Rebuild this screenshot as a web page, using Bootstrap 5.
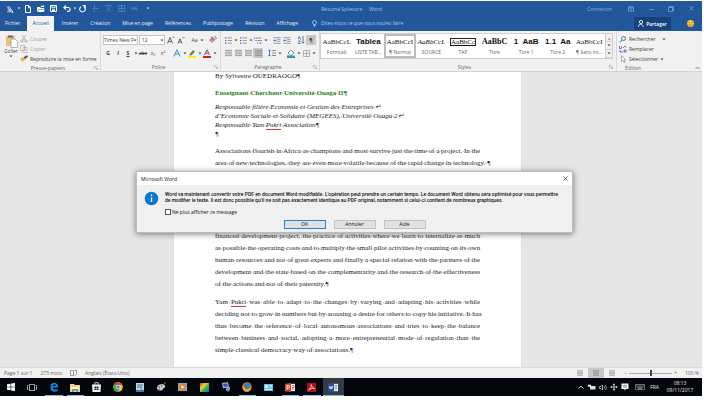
<!DOCTYPE html>
<html lang="fr">
<head>
<meta charset="utf-8">
<meta name="viewport" content="width=device-width, initial-scale=1">
<title>Résumé Sylvestre - Word</title>
<link rel="stylesheet" href="https://cdn.jsdelivr.net/npm/bootstrap@5.3.0/dist/css/bootstrap.min.css">
<style>
  body { font-family: "Open Sans", "Noto Sans", sans-serif; font-size: 5px; line-height: 8px; color: #3a3a3a; background: #fff; padding: 1px 2px 4px 0; }
  button, select, input { font: inherit; color: inherit; }
  button { border: 0; background: none; padding: 0; }
  a { text-decoration: none; color: inherit; }
  svg { display: block; flex: none; }
  .screen { height: calc(100vh - 5px); }
  .blue { background: #22579b; color: #e4edf8; }
  .titlebar { height: 15px; }
  .titlebar .side { flex: 1 1 0; }
  .doc-title { color: #a9c3e6; }
  .ic { display: flex; align-items: center; justify-content: center; width: 10px; height: 10px; }
  .quick { padding-left: 7px; }
  .quick .ic { width: 13px; }
  .quick .ic.slim { width: 5px; }
  .quick .ic.tiny { width: 3px; }
  .quick .dim { opacity: .22; }
  .winctl { gap: 10px; padding-right: 6px; color: #8fb0dc; }
  .tabs { height: 15px; gap: 12px; padding-left: 5px; }
  .tabs .nav-link { padding: 0; line-height: 15px; color: inherit; white-space: nowrap; }
  .tabs .nav-link.active { background: #f1f1f1; color: #22579b; padding: 0 5px; margin: 0 -4px 0 -5px; }
  .tabs .hint { color: #b4cceb; margin-left: 2px; }
  .share { background: #17427d; color: #fff; height: 13px; padding: 0 4px; gap: 2px; font-weight: 600; }
  .ribbon { background: #f1f1f1; height: 41px; border-bottom: 1px solid #d2d2d2; }
  .group { position: relative; border-right: 1px solid #d8d8d8; display: flex; flex-direction: column; padding: 3px 2px 0; flex: none; }
  .group .caption { margin-top: auto; height: 9px; display: flex; align-items: center; color: #666; }
  .group .caption span { flex: 1; text-align: center; }
  .g-clip { width: 101px; } .g-font { width: 120px; } .g-para { width: 99px; }
  .g-style { flex: 1 1 0; padding: 2px 3px 0 0; border-right-color: #d8d8d8; } .g-edit { width: 85px; border: 0; }
  .cmd { display: flex; align-items: center; gap: 2px; height: 10px; white-space: nowrap; }
  .muted { color: #a3a3a3; }
  .paste { width: 18px; line-height: 7px; }
  .line { display: flex; align-items: center; height: 14px; }
  .line.first { height: 12px; }
  .combo { appearance: none; border: 1px solid #c6c6c6; border-radius: 0; background: #fff; height: 10px; line-height: 8px; padding: 0; }
  .combo-box { position: relative; display: flex; margin-right: 1px; }
  .combo-box svg { position: absolute; right: 1px; top: 4px; }
  .w-face { width: 35px; } .w-size { width: 26px; padding-left: 2px; }
  .caret-cell { width: 5px; display: flex; justify-content: center; height: 10px; align-items: center; }
  .pressed { background: #c8c8c8; }
  .gallery { background: #fff; border: 1px solid #cfcfcf; height: 26px; display: flex; }
  .sty { flex: 1 1 0; min-width: 0; overflow: hidden; white-space: nowrap; display: flex; flex-direction: column; align-items: center; padding-top: 2px; color: #666; }
  .sty b, .sty i { display: block; height: 12px; line-height: 12px; font-family: "Liberation Serif", serif; font-size: 7px; color: #111; font-weight: 400; }
  .sty.active { outline: 2px solid #bdbdbd; outline-offset: -2px; }
  .sty b.heavy { font-weight: 700; font-size: 8px; }
  .sty b.sans { font-family: "Liberation Sans", sans-serif; font-weight: 700; font-size: 8px; }
  .sty b.framed { border: 1px solid #222; height: 8px; line-height: 6px; margin: 2px 0; text-decoration: underline; }
  .gscroll { width: 7px; border-left: 1px solid #cfcfcf; }
  .gscroll button { height: 8px; width: 6px; display: flex; align-items: center; justify-content: center; background: #f1f1f1; border-bottom: 1px solid #d5d5d5; }
  .desk { flex: 1 1 0; min-height: 0; background: #e6e6e6; overflow: hidden; position: relative; padding-right: 7px; }
  .sheet { width: 347px; height: 100%; background: #fff; padding: 0 41px; font-family: "Liberation Serif", serif; font-size: 7px; line-height: 12px; color: #1c1c1c; box-shadow: 0 0 1px #bbb; }
  .sheet p { margin: 0 0 6px; white-space: nowrap; }
  .sheet .row-line { display: block; text-align-last: justify; }
  .sheet .short { display: block; }
  .sheet .author { margin-bottom: 8px; line-height: 8px; }
  .sheet .role { color: #2f7d1f; font-weight: 700; margin-bottom: 5px; line-height: 10px; }
  .sheet .post { font-style: italic; line-height: 9px; margin-bottom: 6px; }
  .sheet .hidden-part { height: 55px; }
  .typo { border-bottom: 1px solid #e03030; }
  .dot { background: radial-gradient(circle at 50% 58%, #aaa 0, transparent 1px); }
  .dialogue { position: absolute; left: 136px; top: 99px; width: 437px; background: #f0f0f0; border: 1px solid #bcbcbc; box-shadow: 0 1px 6px rgba(0,0,0,.5); color: #111; }
  .dlg-head { background: #fff; height: 13px; padding: 0 4px; }
  .dlg-body { padding: 6px 5px 0 7px; gap: 6px; line-height: 6px; }
  .dlg-text { white-space: nowrap; font-family: Roboto, "Open Sans", sans-serif; font-weight: 500; }
  .dlg-check { gap: 1px; margin-top: 5px; height: 8px; }
  .dlg-check input { appearance: none; width: 6px; height: 6px; border: 1px solid #555; background: #fff; margin: 0; }
  .dlg-btns { gap: 8px; padding: 4px 0 3px; justify-content: center; }
  .dlg-btns button { width: 42px; height: 9px; line-height: 7px; background: #e1e1e1; border: 1px solid #c4c4c4; }
  .dlg-btns .primary { border: 1px solid #1c86d8; }
  .status { background: #f1f1f1; height: 11px; border-top: 1px solid #dadada; color: #666; padding: 0 3px 0 4px; }
  .status .ic { width: 16px; }
  .zoombar { appearance: none; width: 43px; height: 8px; background: linear-gradient(#aaa,#aaa) center/100% 1px no-repeat; margin: 0 2px; }
  .zoombar::-webkit-slider-thumb { appearance: none; width: 2px; height: 6px; background: #444; }
  .taskbar { background: #03060b; height: 18px; color: #e6e6e6; }
  .apps { display: grid; grid-template-columns: repeat(16, 1fr); width: 344px; }
  .apps button { display: flex; align-items: center; justify-content: center; height: 18px; margin: 0 2px; }
  .apps .run { box-shadow: inset 0 -1px #76b9ed; }
  .apps .focus-app { background: #333c46; margin: 0; }
  .tray { gap: 1px; padding-right: 6px; }
  .clock { width: 32px; line-height: 7px; text-align: center; margin-left: 4px; }
</style>
<script src="https://cdn.jsdelivr.net/npm/bootstrap@5.3.0/dist/js/bootstrap.bundle.min.js"></script>
</head>
<body>
<svg width="0" height="0" class="position-absolute" aria-hidden="true">
  <symbol id="car" viewBox="0 0 4 3"><path d="M.5 .5h3L2 2.3z" fill="currentColor"/></symbol>
  <symbol id="launch" viewBox="0 0 5 5"><path d="M.5 4V.5H4M2 2l2.3 2.3M4.5 2.4v2.1H2.4" fill="none" stroke="#888" stroke-width=".6"/></symbol>
  <symbol id="bullets" viewBox="0 0 8 8"><path d="M0 1h1.5M0 4h1.5M0 7h1.5" stroke="#2b6cb5" stroke-width="1.2"/><path d="M3 1h5M3 4h5M3 7h5" stroke="#777" stroke-width=".8"/></symbol>
  <symbol id="lines" viewBox="0 0 8 8"><path d="M0 1h8M0 3h8M0 5h8M0 7h8" stroke="#777" stroke-width=".8"/></symbol>
  <symbol id="indent" viewBox="0 0 8 8"><path d="M0 .8h8M4 3h4M4 5h4M0 7.2h8" stroke="#777" stroke-width=".8"/><path d="M3.2 4H.4M1.6 2.7.4 4l1.2 1.3" fill="none" stroke="#2b6cb5" stroke-width=".9"/></symbol>
</svg>

<div class="screen d-flex flex-column">
  <header class="blue">
    <div class="titlebar d-flex align-items-center">
      <div class="side quick d-flex align-items-center">
        <button class="ic slim" aria-label="Mode tactile"><svg width="8" height="8" viewBox="0 0 8 8" fill="none" stroke="#fff" stroke-width=".8"><path d="M1 1.5 5 6M2.5 1 6 5.5 7 7.5 4.5 6.5 1.5 4M1 7c1-1.5 2 .5 3 0"/></svg></button>
        <button class="ic slim ms-1" aria-label="Options"><svg width="4" height="3"><use href="#car"/></svg></button>
        <button class="ic" aria-label="Nouveau"><svg width="6" height="8" viewBox="0 0 6 8" fill="none" stroke="#fff"><path d="M.5.5H3.7L5.5 2.3V7.5H.5zM3.5.8v2h2"/></svg></button>
        <button class="ic" aria-label="Ouvrir"><svg width="8" height="8" viewBox="0 0 8 8" fill="#fff"><path d="M0 7V2h3l1 1h3v1H2zM2.3 4.5H8L6.5 7H.6zM4 2V.8h2V0l1.5 1.3L6 2.5V2z"/></svg></button>
        <button class="ic" aria-label="Enregistrer"><svg width="7" height="7" viewBox="0 0 7 7"><path d="M.5.5h6v6h-6zM2 .5v2.3h3V.5" fill="none" stroke="#fff"/><path d="M2 4.4h3v2H2z" fill="#fff"/></svg></button>
        <button class="ic" aria-label="Annuler la frappe"><svg width="8" height="7" viewBox="0 0 8 7" fill="none" stroke="#fff" stroke-width="1.1"><path d="M3 .5.9 2.5 3 4.6M1 2.5h4.2a1.9 1.9 0 0 1 0 3.9H4"/></svg></button>
        <button class="ic tiny" aria-label="Liste"><svg width="4" height="3"><use href="#car"/></svg></button>
        <button class="ic" aria-label="Répéter"><svg width="7" height="8" viewBox="0 0 7 8" fill="none" stroke="#fff" stroke-width="1.1"><path d="M2 1.8a2.8 2.8 0 1 0 3 0M3.6 .6h2.6v2.6"/></svg></button>
        <button class="ic dim" aria-label="Diviser"><svg width="7" height="7" viewBox="0 0 7 7" fill="none" stroke="#fff"><path d="M0 3.5h7M2.5 0v7"/></svg></button>
        <button class="ic dim" aria-label="Supprimer"><svg width="7" height="7" viewBox="0 0 7 7" fill="none" stroke="#fff"><path d="M0 .5h7M1.5 1.5l4 5M5.5 1.5l-4 5"/></svg></button>
        <button class="ic dim" aria-label="Tableau"><svg width="7" height="7" viewBox="0 0 7 7" fill="none" stroke="#fff"><path d="M.5.5h6v6h-6zM.5 3.5h6M3.5.5v6"/></svg></button>
        <button class="ic dim" aria-label="Fractionner"><svg width="7" height="7" viewBox="0 0 7 7" fill="none" stroke="#fff"><path d="M0 3.5h7M1 1l5 5M6 1 1 6"/></svg></button>
        <button class="ic" aria-label="Personnaliser"><svg width="4" height="3"><use href="#car"/></svg></button>
      </div>
      <div class="doc-title">Résumé Sylvestre&nbsp; -&nbsp; Word</div>
      <div class="side winctl d-flex align-items-center justify-content-end">
        <a href="#" class="me-1">Connexion</a>
        <button class="ic" aria-label="Ruban"><svg width="6" height="6" viewBox="0 0 6 6" fill="none" stroke="#7fa3d3" stroke-width=".8"><path d="M.4.8h5.2v4.4H.4zM.4 2h5.2M3 4.6V3"/></svg></button>
        <button class="ic" aria-label="Réduire"><svg width="6" height="6"><path d="M1 3.5h5" stroke="#7fa3d3" stroke-width=".8"/></svg></button>
        <button class="ic" aria-label="Niveau inférieur"><svg width="6" height="6" viewBox="0 0 6 6" fill="none" stroke="#7fa3d3" stroke-width=".8"><path d="M.5 1.5h4v4h-4zM1.5 1.5v-1h4v4h-1"/></svg></button>
        <button class="ic" aria-label="Fermer"><svg width="5" height="5"><path d="M.5.5l4 4M4.500.5l-4 4" stroke="#7fa3d3" stroke-width=".8"/></svg></button>
      </div>
    </div>
    <nav class="tabs nav flex-nowrap align-items-center">
      <a class="nav-link" href="#">Fichier</a>
      <a class="nav-link active" href="#" aria-current="page">Accueil</a>
      <a class="nav-link" href="#">Insérer</a>
      <a class="nav-link" href="#">Création</a>
      <a class="nav-link" href="#">Mise en page</a>
      <a class="nav-link" href="#">Références</a>
      <a class="nav-link" href="#">Publipostage</a>
      <a class="nav-link" href="#">Révision</a>
      <a class="nav-link" href="#">Affichage</a>
      <a class="nav-link hint d-flex align-items-center" href="#"><svg width="5" height="7" viewBox="0 0 5 7" class="me-1" fill="none" stroke="#dce8f7" stroke-width=".7"><path d="M1.600 4.500C0 3 .4.5 2.500.5s2.500 2.500.9 4zM1.600 5.500h1.800M2 6.500h1"/></svg>Dites-nous ce que vous voulez faire</a>
      <div class="ms-auto d-flex align-items-center pe-2 gap-3">
        <button class="share d-flex align-items-center"><svg width="6" height="7" viewBox="0 0 6 7" fill="none" stroke="#fff" stroke-width=".9"><circle cx="3" cy="2" r="1.600"/><path d="M.5 6.800C.5 3.500 4 3.500 5.500 6.800"/></svg>Partager</button>
        <button aria-label="Commentaires"><svg width="7" height="7" viewBox="0 0 7 7"><circle cx="3.500" cy="3.500" r="3.400" fill="#fcc72c"/><path d="M2.300 2v1M4.700 2v1M1.700 4.300c.8 1.300 2.800 1.300 3.600 0" stroke="#7a5200" stroke-width=".6" fill="none"/></svg></button>
      </div>
    </nav>
  </header>

  <section class="ribbon d-flex" aria-label="Ruban">
    <div class="group g-clip">
      <div class="d-flex">
        <button class="paste d-flex flex-column align-items-center"><svg width="13" height="14" viewBox="0 0 13 14"><path d="M1 2h9v10H1z" fill="#ecc078"/><path d="M3 1.500h5v2H3z" fill="#666"/><path d="M6 5h4l2.500 2.500v6H6z" fill="#fff" stroke="#8a97a8" stroke-width=".7"/></svg>Coller<svg width="4" height="3"><use href="#car"/></svg></button>
        <div>
          <button class="cmd muted"><svg width="8" height="8" viewBox="0 0 8 8" fill="none" stroke="#aaa" stroke-width=".8"><path d="M2 0l3 5M6 0 3 5"/><circle cx="2" cy="6" r="1.200"/><circle cx="6" cy="6" r="1.200"/></svg>Couper</button>
          <button class="cmd muted"><svg width="8" height="8" viewBox="0 0 8 8" fill="#f7f7f7" stroke="#aaa" stroke-width=".7"><path d="M.5.5h4v5h-4zM3 2.500h4v5H3zM4 4h2M4 5.500h2"/></svg>Copier</button>
          <button class="cmd"><svg width="8" height="8" viewBox="0 0 8 8"><path d="M0 4l3-2 2 2.500L2.500 7z" fill="#ecb24f"/><path d="M3.500 2.200 5 4.300 8 1.500 7 .3z" fill="#555"/></svg>Reproduire la mise en forme</button>
        </div>
      </div>
      <div class="caption"><span>Presse-papiers</span><svg width="4" height="4"><use href="#launch"/></svg></div>
    </div>

    <div class="group g-font">
      <div class="line first">
        <label class="combo-box"><select class="combo w-face" aria-label="Police"><option>Times New F</option></select><svg width="4" height="3"><use href="#car"/></svg></label>
        <label class="combo-box"><select class="combo w-size" aria-label="Taille"><option>12</option></select><svg width="4" height="3"><use href="#car"/></svg></label>
        <button class="ic" aria-label="Agrandir"><svg width="8" height="8" viewBox="0 0 8 8" fill="none" stroke="#444" stroke-width=".8"><path d="M.5 7.500 3 1.500l2.500 6M1.500 5.500h3"/><path d="M5.500 2 6.500.8 7.500 2" stroke="#2b6cb5"/></svg></button>
        <button class="ic" aria-label="Réduire la police"><svg width="8" height="8" viewBox="0 0 8 8" fill="none" stroke="#444" stroke-width=".8"><path d="M1 7.500 3 2.800l2 4.700M1.800 6h2.400"/><path d="M5.500 1 6.500 2.200 7.500 1" stroke="#2b6cb5"/></svg></button>
        <button class="ic ms-1">Aa</button><span class="caret-cell"><svg width="4" height="3"><use href="#car"/></svg></span>
        <button class="ic ms-1" aria-label="Effacer la mise en forme"><svg width="8" height="8" viewBox="0 0 8 8"><path d="M0 4l3 3 4-3.500-2-2z" fill="#e58aa0"/><path d="M1 5 3 .8 4.500 4M6 0l1.500 3" fill="none" stroke="#666" stroke-width=".8"/></svg></button>
      </div>
      <div class="line">
        <button class="ic fw-bold">G</button>
        <button class="ic fst-italic fw-bold">I</button>
        <button class="ic text-decoration-underline fw-bold">S</button><span class="caret-cell"><svg width="4" height="3"><use href="#car"/></svg></span>
        <button class="ic text-decoration-line-through">abc</button>
        <button class="ic">x₂</button>
        <button class="ic">x²</button>
        <button class="ic ms-1" aria-label="Effets de texte"><svg width="8" height="8" viewBox="0 0 8 8" fill="none" stroke="#3d8ad6" stroke-width="1"><path d="M.8 7.500 4 .8l3.200 6.700M2 5h4"/></svg></button><span class="caret-cell"><svg width="4" height="3"><use href="#car"/></svg></span>
        <button class="ic" aria-label="Surlignage"><svg width="8" height="9" viewBox="0 0 8 9"><path d="M1 6 5 1l2 1.500L3.500 6.500z" fill="#777"/><path d="M0 7h8v2H0z" fill="#ffee00"/></svg></button><span class="caret-cell"><svg width="4" height="3"><use href="#car"/></svg></span>
        <button class="ic" aria-label="Couleur de police"><svg width="8" height="9" viewBox="0 0 8 9"><path d="M1.500 6 4 .8 6.500 6M2.500 4.200h3" fill="none" stroke="#555" stroke-width=".9"/><path d="M0 7h8v2H0z" fill="#e01a1a"/></svg></button><span class="caret-cell"><svg width="4" height="3"><use href="#car"/></svg></span>
      </div>
      <div class="caption"><span>Police</span><svg width="4" height="4"><use href="#launch"/></svg></div>
    </div>

    <div class="group g-para">
      <div class="line first">
        <button class="ic" aria-label="Puces"><svg width="7" height="7"><use href="#bullets"/></svg></button><span class="caret-cell"><svg width="4" height="3"><use href="#car"/></svg></span>
        <button class="ic" aria-label="Numérotation"><svg width="7" height="7"><use href="#bullets"/></svg></button><span class="caret-cell"><svg width="4" height="3"><use href="#car"/></svg></span>
        <button class="ic" aria-label="Liste multiniveau"><svg width="8" height="7" viewBox="0 0 8 7"><path d="M0 1h1.200M1.500 3.500h1.200M3 6h1.200" stroke="#2b6cb5"/><path d="M2 1h5M3.500 3.500H8M5 6h3" stroke="#777" stroke-width=".8"/></svg></button><span class="caret-cell"><svg width="4" height="3"><use href="#car"/></svg></span>
        <button class="ic ms-1" aria-label="Diminuer le retrait"><svg width="8" height="7"><use href="#indent"/></svg></button>
        <button class="ic" aria-label="Augmenter le retrait"><svg width="8" height="7"><use href="#indent"/></svg></button>
        <button class="ic ms-1" aria-label="Trier"><svg width="7" height="8" viewBox="0 0 7 8" fill="none" stroke="#2b6cb5" stroke-width=".8"><path d="M0 3.500 1.300.5l1.300 3M0 5h2.500L0 7.500h2.500"/><path d="M5 0v7M3.700 5.800 5 7.300l1.300-1.500" stroke="#555"/></svg></button>
        <button class="ic pressed fw-bold">¶</button>
      </div>
      <div class="line">
        <button class="ic" aria-label="Gauche"><svg width="7" height="8"><use href="#lines"/></svg></button>
        <button class="ic" aria-label="Centrer"><svg width="7" height="8"><use href="#lines"/></svg></button>
        <button class="ic" aria-label="Droite"><svg width="7" height="8"><use href="#lines"/></svg></button>
        <button class="ic pressed" aria-label="Justifier"><svg width="7" height="8"><use href="#lines"/></svg></button>
        <button class="ic ms-1" aria-label="Interligne"><svg width="8" height="8" viewBox="0 0 8 8"><path d="M1.500 1v6M.3 2.200 1.500.8l1.200 1.400M.3 5.800l1.200 1.400 1.200-1.400" fill="none" stroke="#2b6cb5" stroke-width=".8"/><path d="M4 1.500h4M4 4h4M4 6.500h4" stroke="#777" stroke-width=".8"/></svg></button><span class="caret-cell"><svg width="4" height="3"><use href="#car"/></svg></span>
        <button class="ic ms-1" aria-label="Trame"><svg width="8" height="9" viewBox="0 0 8 9"><path d="M1 4 4 1l3 3-3 2.500z" fill="#fff" stroke="#666" stroke-width=".7"/><path d="M0 6.500h8V9H0z" fill="#1d9cb4"/></svg></button><span class="caret-cell"><svg width="4" height="3"><use href="#car"/></svg></span>
        <button class="ic" aria-label="Bordures"><svg width="7" height="7" viewBox="0 0 7 7" fill="none" stroke="#999" stroke-width=".7"><path d="M.5.5h6v6h-6zM3.500.5v6M.5 3.500h6"/></svg></button><span class="caret-cell"><svg width="4" height="3"><use href="#car"/></svg></span>
      </div>
      <div class="caption"><span>Paragraphe</span><svg width="4" height="4"><use href="#launch"/></svg></div>
    </div>

    <div class="group g-style">
      <div class="gallery">
        <button class="sty"><b>AaBbCcL</b>Formtab</button>
        <button class="sty"><b class="sans">Tablea</b>LISTE TAB...</button>
        <button class="sty active"><b>AaBbCcI</b>¶ Normal</button>
        <button class="sty"><i>AaBbCcL</i>SOURCE</button>
        <button class="sty"><b class="framed">AaBbCc</b>TAP</button>
        <button class="sty"><b class="heavy">AaBbC</b>Titre</button>
        <button class="sty"><b class="sans">1&nbsp; AaB</b>Titre 1</button>
        <button class="sty"><b class="sans">1.1&nbsp; Aa</b>Titre 2</button>
        <button class="sty"><b>AaBbCcI</b>¶ Sans int...</button>
        <div class="gscroll"><button aria-label="Haut" class="muted">▴</button><button aria-label="Bas"><svg width="4" height="3"><use href="#car"/></svg></button><button aria-label="Plus"><svg width="4" height="3"><use href="#car"/></svg></button></div>
      </div>
      <div class="caption"><span>Styles</span><svg width="4" height="4"><use href="#launch"/></svg></div>
    </div>

    <div class="group g-edit">
      <div>
        <button class="cmd"><svg width="8" height="7" viewBox="0 0 8 7" fill="none" stroke="#2b6cb5" stroke-width=".9"><circle cx="4.500" cy="2.500" r="2"/><path d="M3 4 .8 6.500"/></svg>Rechercher<svg width="4" height="3" class="ms-1"><use href="#car"/></svg></button>
        <button class="cmd"><svg width="8" height="8" viewBox="0 0 8 8" fill="none" stroke-width=".8"><path d="M.5 1v2.500h2v-2M4 3l2-2 1.500 1.500" stroke="#7a4a8c"/><path d="M1 5v2h3M5 5h2v2H5z" stroke="#2b6cb5"/></svg>Remplacer</button>
        <button class="cmd"><svg width="8" height="8" viewBox="0 0 8 8" fill="#fff" stroke="#888" stroke-width=".7"><path d="M2.500.5v6l1.500-1.300L5 7.500l1-.5-1-2h1.700z"/></svg>Sélectionner<svg width="4" height="3"><use href="#car"/></svg></button>
      </div>
      <div class="caption"><span class="pe-5">Édition</span><svg width="5" height="4" viewBox="0 0 5 4"><path d="M.5 3 2.500 1l2 2" fill="none" stroke="#666" stroke-width=".8"/></svg></div>
    </div>
  </section>

  <main class="desk">
    <article class="sheet mx-auto" lang="en">
      <p class="author">By Sylvestre OUEDRAOGO¶</p>
      <p class="role">Enseignant Chercheur Université Ouaga II¶</p>
      <p class="post">Responsable filière Economie et Gestion des Entreprises ↵<br>d’Economie Sociale et Solidaire (MEGEES), Université Ouaga 2↵<br>Responsable Yam <span class="typo">Pukri</span> Association¶<br>¶</p>
      <p><span class="row-line">Associations flourish in Africa as champions and most survive just the time of a project. In the</span><span class="short">area of new technologies, they are even more volatile because of the rapid change in technology. ¶</span></p>
      <div class="hidden-part"></div>
      <p><span class="row-line">financed development project, the practice of activities where we learn to internalize as much</span><span class="row-line">as possible the operating costs and to multiply the small pilot activities by counting on its own</span><span class="row-line">human resources and not of great experts and finally a special relation with the partners of the</span><span class="row-line">development and the state based on the complementarity and the research of the effectiveness</span><span class="short">of the actions and not of their paternity.¶</span></p>
      <p><span class="row-line">Yam <span class="typo">Pukri</span> was able to adapt to the changes by varying and adapting his activities while</span><span class="row-line">deciding not to grow in numbers but by arousing a desire for others to copy his initiative. It has</span><span class="row-line">thus become the reference of local autonomous associations and tries to keep the balance</span><span class="row-line">between business and social, adopting a more entrepreneurial mode of regulation than the</span><span class="short">simple classical democracy way of associations.¶</span></p>
    </article>

    <div class="dialogue" role="dialog" aria-labelledby="dlgTitle">
      <div class="dlg-head d-flex align-items-center justify-content-between"><span id="dlgTitle">Microsoft Word</span><button aria-label="Fermer la boîte"><svg width="5" height="5"><path d="M.5.5l4 4M4.500.5l-4 4" stroke="#333" stroke-width=".8"/></svg></button></div>
      <div class="dlg-body d-flex">
        <svg width="15" height="15" viewBox="0 0 15 15"><circle cx="7.500" cy="7.500" r="6.800" fill="#0a78d0"/><path d="M7.500 6.300v4.700M7.500 3.600v1.300" stroke="#fff" stroke-width="1.300"/></svg>
        <div>
          <div class="dlg-text">Word va maintenant convertir votre PDF en document Word modifiable. L’opération peut prendre un certain temps. Le document Word obtenu sera optimisé pour vous permettre<br>de modifier le texte. Il est donc possible qu’il ne soit pas exactement identique au PDF original, notamment si celui-ci contient de nombreux graphiques.</div>
          <label class="dlg-check d-flex align-items-center"><input type="checkbox">Ne plus afficher ce message</label>
        </div>
      </div>
      <div class="dlg-btns d-flex"><button class="primary">OK</button><button>Annuler</button><button>Aide</button></div>
    </div>
  </main>

  <footer class="status d-flex align-items-center">
    <span class="me-2">Page 1 sur 1</span><span class="me-2">275 mots</span>
    <svg width="7" height="6" viewBox="0 0 7 6" class="me-2" fill="none" stroke="#777" stroke-width=".7"><path d="M3.500 1v4.500H.5v-5h2zM3.500 1 4.500.5h2v3M4 4.500l1 1L6.800 3.500"/></svg>
    <span>Anglais (États-Unis)</span>
    <div class="ms-auto d-flex align-items-center">
      <button class="ic" aria-label="Lecture"><svg width="6" height="6"><use href="#lines"/></svg></button>
      <button class="ic pressed" aria-label="Page"><svg width="6" height="6"><use href="#lines"/></svg></button>
      <button class="ic" aria-label="Web"><svg width="6" height="6"><use href="#lines"/></svg></button>
      <button class="ms-1">−</button><input type="range" class="zoombar" aria-label="Zoom" value="50"><button class="me-2">+</button><span>100 %</span>
    </div>
  </footer>

  <footer class="taskbar d-flex align-items-center justify-content-between">
    <div class="apps">
      <button aria-label="Démarrer"><svg width="8" height="8" viewBox="0 0 8 8"><path d="M0 1.200 3.600.7v3H0zM4.200.6 8 0v3.700H4.200zM0 4.300h3.600v3L0 6.800zM4.200 4.300H8V8l-3.800-.6z" fill="#fff"/></svg></button>
      <button aria-label="Vue des tâches"><svg width="10" height="7" viewBox="0 0 10 7" fill="none" stroke="#ccc" stroke-width=".8"><path d="M2.500.5h5v6h-5zM1.500 1.500h-1v4h1M8.500 1.500h1v4h-1"/></svg></button>
      <button class="run" aria-label="Edge"><svg width="10" height="10" viewBox="0 0 10 10"><path d="M.8 5C1.200-.8 9.500-.8 9.300 5.600H3.700c.2 2.400 3.200 2.600 5 1.500v2C5.500 10.700 1.500 9.400 1.500 5.900c0-1.300.7-2.400 1.700-3C2 3 1.200 4 .8 5zM3.800 4.100h3c0-2-2.700-2-3 0z" fill="#1483dc"/></svg></button>
      <button class="run" aria-label="Explorateur"><svg width="10" height="9" viewBox="0 0 10 9"><path d="M0 1h4l1 1h5v7H0z" fill="#f3d27a"/><path d="M1 4h8v2H1z" fill="#fff3c4"/><path d="M2 6h6v3H6.500V7.500h-3V9H2z" fill="#3f9fd8"/></svg></button>
      <button aria-label="Store"><svg width="9" height="10" viewBox="0 0 9 10"><path d="M0 2.500h9L8.500 10h-8z" fill="#f2f2f2"/><path d="M2.800 3.500V.7h3.400v2.800" fill="none" stroke="#f2f2f2" stroke-width=".8"/><path d="M2.500 4.500h1.800V6H2.500zM4.700 4.500h1.800V6H4.700zM2.500 6.500h1.800V8H2.500zM4.700 6.500h1.800V8H4.700z" fill="#222"/></svg></button>
      <button aria-label="Chrome"><svg width="10" height="10" viewBox="0 0 10 10"><circle cx="5" cy="5" r="4.800" fill="#f5c518"/><path d="M5 5 .8 2.600A4.800 4.800 0 0 1 9.300 3L5 3z" fill="#de4334"/><path d="M5 5 .8 2.600A4.800 4.800 0 0 0 4.600 9.800L7 6z" fill="#2fa24c"/><circle cx="5" cy="5" r="2.300" fill="#fff"/><circle cx="5" cy="5" r="1.800" fill="#4285f4"/></svg></button>
      <button aria-label="Bloc-notes"><svg width="8" height="9" viewBox="0 0 8 9"><path d="M0 0h8v9H0z" fill="#b9d6ea"/><path d="M1 2h6M1 4h5" stroke="#4d7896"/><path d="M0 7h8v2H0z" fill="#3177b0"/><path d="M4 4l3 4" stroke="#a66b39"/></svg></button>
      <button aria-label="Paint"><svg width="10" height="10" viewBox="0 0 10 10"><path d="M1 6c0-4 7-5 8-2 .6 2-2 1.500-2 3S2 10 1 6z" fill="#d6dfe5"/><circle cx="3" cy="5" r=".9" fill="#d94b3b"/><circle cx="5.500" cy="3.800" r=".9" fill="#3da35d"/><circle cx="3.500" cy="7.200" r=".9" fill="#3f7bd2"/><path d="M9.500.5 5 6" stroke="#c98a44" stroke-width="1"/></svg></button>
      <button aria-label="Lecteur"><svg width="9" height="8" viewBox="0 0 9 8"><path d="M0 0h9v8H0z" fill="#8ba5b4"/><circle cx="4.500" cy="4" r="3.200" fill="#ee7b2b"/><path d="M3.500 2.200 6.500 4l-3 1.800z" fill="#fff"/></svg></button>
      <button aria-label="Couleurs"><svg width="9" height="9" viewBox="0 0 9 9"><defs><linearGradient id="rb" x2="1" y2="1"><stop stop-color="#e2332d"/><stop offset=".35" stop-color="#f1d62b"/><stop offset=".6" stop-color="#35b44a"/><stop offset="1" stop-color="#2b62d9"/></linearGradient></defs><path d="M0 0h9v9H0z" fill="url(#rb)"/></svg></button>
      <button aria-label="Réseau"><svg width="10" height="10" viewBox="0 0 10 10"><path d="M1 1l6-.8 1 5-6 1z" fill="#b9c9ee"/><path d="M2 1.800l4.300-.5.700 3.200-4.300.6z" fill="#3553b5"/><path d="M5 5h4v2.500L7 10 5 8z" fill="#8294cf"/></svg></button>
      <button class="run" aria-label="Firefox"><svg width="10" height="10" viewBox="0 0 10 10"><circle cx="5" cy="5" r="4.800" fill="#ee6a1f"/><circle cx="5.300" cy="4" r="3.200" fill="#2784c7"/><path d="M.4 4c1 0 2 1 2.500 2.200C4 8 7 7.500 8.500 4.500 9 8 7 9.800 5 9.800S0 8 .4 4z" fill="#f6a623"/></svg></button>
      <button aria-label="Panneau"><svg width="9" height="7" viewBox="0 0 9 7"><path d="M0 0h9v7H0z" fill="#5fc0ea"/><path d="M1 1h3v3H1z" fill="#d5f1fc"/><path d="M5.500 1.500h2.500M5.500 3h2.500M1 5.500h7" stroke="#fff" stroke-width=".7"/></svg></button>
      <button class="run" aria-label="PowerPoint"><svg width="10" height="9" viewBox="0 0 10 9"><path d="M4 .8h6v7.400H4z" fill="#fff"/><path d="M0 .8 6 0v9L0 8.200z" fill="#d24625"/><path d="M2 6.800V2.500h1.300a1.200 1.200 0 0 1 0 2.500H2" fill="none" stroke="#fff" stroke-width=".9"/><path d="M7 2.500h2v2H7M7 6h2" stroke="#d24625" stroke-width=".8" fill="none"/></svg></button>
      <button class="run" aria-label="Acrobat"><svg width="9" height="9" viewBox="0 0 9 9"><path d="M0 0h9v9H0z" fill="#b80f14"/><path d="M1.500 7c2-1 3-3.500 2.700-5.500C4.800 4 6 5.300 7.800 5.500 5.500 5 3.500 5.500 1.500 7z" fill="none" stroke="#fff" stroke-width=".7"/></svg></button>
      <button class="run focus-app" aria-label="Word"><svg width="10" height="9" viewBox="0 0 10 9"><path d="M4 .8h6v7.400H4z" fill="#e9f0fa"/><path d="M0 .8 6 0v9L0 8.200z" fill="#2a5699"/><path d="M1.300 3l.9 3L3 3.500 3.800 6l.9-3" fill="none" stroke="#fff" stroke-width=".7"/><path d="M6.800 2.500H9M6.800 4.200H9M6.800 6H9" stroke="#2a5699" stroke-width=".6"/></svg></button>
    </div>
    <div class="tray d-flex align-items-center">
      <span class="ic"><svg width="6" height="4" viewBox="0 0 6 4"><path d="M.5 3.500 3 1l2.500 2.500" fill="none" stroke="#eee" stroke-width=".9"/></svg></span>
      <span class="ic"><svg width="8" height="6" viewBox="0 0 8 6"><path d="M2 2h5.500v3.500H2z" fill="#ddd"/><path d="M0 .8h3v2H0z" fill="#fff"/></svg></span>
      <span class="ic"><svg width="8" height="7" viewBox="0 0 8 7" fill="none" stroke="#ddd" stroke-width=".7"><path d="M.5 2.500H2L3.500 1v5L2 4.500H.5zM4.800 2.200c.8.800.8 1.800 0 2.600M6.200 1c1.500 1.500 1.500 3.500 0 5"/></svg></span>
      <span class="ic"><svg width="8" height="8" viewBox="0 0 8 8" fill="none" stroke="#ddd" stroke-width=".8"><path d="M4 .5v7M.5 4h7M3 1.500h2M3 6.500h2M1.500 3v2M6.500 3v2"/></svg></span>
      <span class="ic"><svg width="8" height="8" viewBox="0 0 8 8"><path d="M.5.5h7V6H5L3.500 7.800V6h-3z" fill="#fff"/><path d="M2 2.300h4M2 4h4" stroke="#333" stroke-width=".6"/></svg></span>
      <span class="ic mx-1"><svg width="10" height="6" viewBox="0 0 10 6" fill="none" stroke="#aaa" stroke-width=".7"><path d="M.4.4h9.200v5.200H.4zM1.500 2h7M1.500 3.300h7M3 4.500h4"/></svg></span>
      <span>FRA</span>
      <div class="clock">08:13<br>09/11/2017</div>
    </div>
  </footer>
</div>
<script>
  // Show a formatting dot inside every space of the document text.
  const walker = document.createTreeWalker(document.querySelector('.sheet'), NodeFilter.SHOW_TEXT);
  const nodes = [];
  while (walker.nextNode()) if (walker.currentNode.data.trim()) nodes.push(walker.currentNode);
  nodes.forEach(n => {
    const frag = document.createDocumentFragment();
    n.data.split(/( )/).forEach(part => {
      if (part === ' ') {
        const s = document.createElement('span');
        s.className = 'dot';
        s.textContent = ' ';
        frag.append(s);
      } else frag.append(part);
    });
    n.replaceWith(frag);
  });
</script>
</body>
</html>
